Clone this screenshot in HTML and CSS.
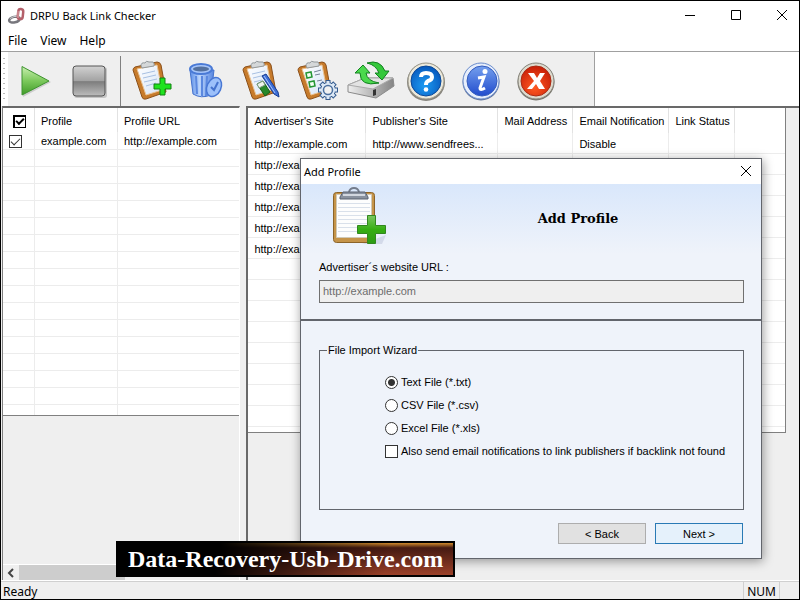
FILE: index.html
```
<!DOCTYPE html>
<html lang="en">
<head>
    <meta charset="UTF-8">
    <meta name="viewport" content="width=device-width, initial-scale=1.0">
    <title>DRPU Back Link Checker</title>
    <link rel="stylesheet" href="styles.css">
</head>
<body>
    <div class="window">
        <header class="title-bar">
            <svg class="app-icon" viewBox="0 0 18 18" width="18" height="18">
                <ellipse cx="6.500" cy="12.500" rx="5.500" ry="2.800" fill="none" stroke="#77777d" stroke-width="2.500" transform="rotate(-12 7 12.500)"/>
                <path d="M2 11.500q4-3 8-2" fill="none" stroke="#c8c8cc"/>
                <rect x="10" y="2" width="5" height="10" rx="2.500" fill="none" stroke="#b4606a" stroke-width="2.500" transform="rotate(6 12 7)"/>
                <path d="M10 4v7" stroke="#e2a9ae"/>
            </svg>
            <h1>DRPU Back Link Checker</h1>
            <div class="window-buttons">
                <button type="button" aria-label="Minimize"><svg viewBox="0 0 12 12" width="12" height="12"><path d="M1 5.500h10" stroke="#000"/></svg></button>
                <button type="button" aria-label="Maximize"><svg viewBox="0 0 12 12" width="12" height="12"><path d="M1.500 .500h9v9h-9z" fill="none" stroke="#000"/></svg></button>
                <button type="button" aria-label="Close"><svg viewBox="0 0 12 12" width="12" height="12"><path d="M1 0l10 10M11 0L1 10" stroke="#000"/></svg></button>
            </div>
        </header>

        <nav class="menu">
            <a href="#">File</a>
            <a href="#">View</a>
            <a href="#">Help</a>
        </nav>

        <div class="toolbar">
            <div class="grip"></div>
            <div class="tools">
                <button type="button" aria-label="Start">
                    <svg viewBox="0 0 40 40" width="40" height="40">
                        <defs>
                            <linearGradient id="play" x1="0" y1="0" x2="0" y2="1"><stop offset="0" stop-color="#c9efb0"/><stop offset=".5" stop-color="#7cc95c"/><stop offset="1" stop-color="#3f9a27"/></linearGradient>
                        </defs>
                        <path d="M7 7L35 21L7 36z" fill="#aaa" opacity=".5"/>
                        <path d="M6 5.500L33 20L6 34z" fill="url(#play)" stroke="#3f9430" stroke-linejoin="round"/>
                    </svg>
                </button>
                <button type="button" aria-label="Stop">
                    <svg viewBox="0 0 40 40" width="40" height="40">
                        <defs>
                            <linearGradient id="stop" x1="0" y1="0" x2="0" y2="1"><stop offset="0" stop-color="#d2d2d2"/><stop offset=".5" stop-color="#a2a2a2"/><stop offset=".52" stop-color="#7d7d7d"/><stop offset="1" stop-color="#bdbdbd"/></linearGradient>
                        </defs>
                        <rect x="5" y="6" width="33" height="31" rx="3" fill="#999" opacity=".5"/>
                        <rect x="4" y="5" width="32" height="30" rx="3" fill="url(#stop)" stroke="#555"/>
                    </svg>
                </button>
                <div class="separator"></div>
                <button type="button" aria-label="Add profile">
                    <svg viewBox="0 0 40 40" width="40" height="40">
                        <defs>
                            <linearGradient id="paper" x1="0" y1="0" x2="1" y2="1"><stop offset="0" stop-color="#fff"/><stop offset="1" stop-color="#d5e3f6"/></linearGradient>
                            <g id="board">
                                <path d="M4 6L26 1Q29 1 30 4L35 31L15 38Q12 39 11 36L2 9Q2 7 4 6z" fill="#c77b2b" stroke="#8b501b"/>
                                <path d="M6 8L26 4L31 29L15 34z" fill="url(#paper)" stroke="#e9c395"/>
                                <path d="M10 5Q10 1 14 2Q15-1 18 1L22 1Q24 3 23 5L11 7z" fill="#d5d8d9" stroke="#92989b"/>
                            </g>
                        </defs>
                        <use href="#board"/>
                        <path d="M11 13l13-3M12 17l13-3M13 21l13-3M15 25l10-3" stroke="#a8c0e2"/>
                        <path d="M29 17h5v6h6v5h-6v6h-5v-6h-6v-5h6z" fill="#1fe31f" stroke="#128212"/>
                    </svg>
                </button>
                <button type="button" aria-label="Delete profile">
                    <svg viewBox="0 0 40 40" width="40" height="40">
                        <defs>
                            <linearGradient id="bin"><stop offset="0" stop-color="#5c8fe8"/><stop offset=".4" stop-color="#bcd5fb"/><stop offset="1" stop-color="#5484e0"/></linearGradient>
                        </defs>
                        <path d="M4 9L7 33Q15 38 25 34L28 9z" fill="url(#bin)" stroke="#4472cd"/>
                        <path d="M10 15l1 18M16 15v20M21 15l-1 20" stroke="#5b88df" stroke-width="2"/>
                        <ellipse cx="15" cy="8" rx="11" ry="5" fill="#a6c5f9" stroke="#4a7ad6" stroke-width="2"/>
                        <ellipse cx="15" cy="8" rx="8" ry="2.500" fill="#54719f"/>
                        <ellipse cx="28" cy="26" rx="7" ry="10" fill="#9cc0fa" stroke="#4877d4" stroke-width="1.500" transform="rotate(24 28 26)"/>
                        <path d="M25 26l3 3 4-8" fill="none" stroke="#4472cd" stroke-width="2"/>
                    </svg>
                </button>
                <button type="button" aria-label="Edit profile">
                    <svg viewBox="0 0 40 40" width="40" height="40">
                        <use href="#board"/>
                        <path d="M11 13l13-3M12 17l12-3M13 21l8-2" stroke="#a8c0e2"/>
                        <path d="M21 15l4-2 12 18 1 5-5-3z" fill="#3e6fd6" stroke="#173b91"/>
                        <path d="M23 15l11 17" stroke="#a9c6ff"/>
                        <path d="M16 23l6-3 7 11-5 4z" fill="#27882b" stroke="#146018"/>
                        <path d="M16 23l6-3 2 4-6 3z" fill="#eef4ee" stroke="#7c9b7d"/>
                    </svg>
                </button>
                <button type="button" aria-label="Settings">
                    <svg viewBox="0 0 40 40" width="40" height="40">
                        <use href="#board"/>
                        <path d="M10 12l5-1 1 5-5 1zM13 21l5-1 1 5-5 1z" fill="#f5fff5" stroke="#259634" stroke-width="1.500"/>
                        <path d="M18 11l7-2M19 14l5-1M21 20l5-1" stroke="#738196"/>
                        <path d="M32 19v20M22 29h20M25 22l14 14M39 22L25 36" stroke="#345b8f" stroke-width="5"/>
                        <circle cx="32" cy="29" r="7.500" fill="#dce8f5" stroke="#345b8f"/>
                        <path d="M32 20v18M23 29h18M25.700 22.700l12.600 12.600M38.300 22.700L25.700 35.300" stroke="#dce8f5" stroke-width="3"/>
                        <circle cx="32" cy="29" r="4.500" fill="#f1f1f1" stroke="#4a6f9f" stroke-width="1.500"/>
                    </svg>
                </button>
                <button type="button" aria-label="Update">
                    <svg viewBox="-3 0 46 40" width="46" height="40">
                        <defs>
                            <linearGradient id="drive"><stop offset="0" stop-color="#eee"/><stop offset="1" stop-color="#858585"/></linearGradient>
                        </defs>
                        <path d="M-3 24L14 17H42L43 25L25 37L-3 31z" fill="url(#drive)" stroke="#8a8a8a"/>
                        <path d="M-3 24L14 17H42L22 28z" fill="#e3e3e3" stroke="#aaa"/>
                        <path d="M22 29l3-1v6l-3 1z" fill="#333"/>
                        <path d="M16 2Q29-2 34 10H38L31 19L24 12H28Q25 4 16 2z" fill="#34c83b" stroke="#128020"/>
                        <path d="M28 22Q9 26 9 12H4L12 4L19 12H15Q16 20 28 22z" fill="#4bd94d" stroke="#128020"/>
                    </svg>
                </button>
                <button type="button" aria-label="Help">
                    <svg viewBox="0 0 40 40" width="40" height="40">
                        <defs>
                            <radialGradient id="blue" cx=".45" cy=".65" r=".65"><stop offset="0" stop-color="#1d9bf2"/><stop offset="1" stop-color="#0758bd"/></radialGradient>
                        </defs>
                        <circle cx="20" cy="21" r="19" fill="#86847d"/>
                        <circle cx="20" cy="20" r="18" fill="#ece9dc" stroke="#9a978a"/>
                        <circle cx="20" cy="20" r="15" fill="url(#blue)" stroke="#0b4897"/>
                        <path d="M15 16Q15 12 20 12Q26 12 26 16Q26 19 22 20Q20 21 20 24" fill="none" stroke="#fff" stroke-width="4"/>
                        <circle cx="20" cy="28.500" r="2.300" fill="#fff"/>
                    </svg>
                </button>
                <button type="button" aria-label="About">
                    <svg viewBox="0 0 40 40" width="40" height="40">
                        <defs>
                            <linearGradient id="info" x1="0" y1="0" x2="0" y2="1"><stop offset="0" stop-color="#75a0ee"/><stop offset="1" stop-color="#204bcd"/></linearGradient>
                        </defs>
                        <circle cx="20" cy="21" r="18.500" fill="#64779c"/>
                        <circle cx="20" cy="20" r="18" fill="#e7eefb" stroke="#6b8dcc"/>
                        <circle cx="21" cy="20" r="15" fill="url(#info)" stroke="#345cbd"/>
                        <path d="M17 17l6-1-4 11q0 3 5 0" fill="none" stroke="#fff" stroke-width="3"/>
                        <circle cx="24" cy="10.500" r="2.500" fill="#fff"/>
                    </svg>
                </button>
                <button type="button" aria-label="Exit">
                    <svg viewBox="0 0 40 40" width="40" height="40">
                        <defs>
                            <radialGradient id="red" cx=".45" cy=".7" r=".65"><stop offset="0" stop-color="#ff5a22"/><stop offset="1" stop-color="#cb2209"/></radialGradient>
                        </defs>
                        <circle cx="20" cy="21" r="18.500" fill="#77756d"/>
                        <circle cx="20" cy="20" r="18" fill="#dddace" stroke="#85837a"/>
                        <circle cx="20" cy="20" r="15" fill="url(#red)" stroke="#a92a14"/>
                        <path d="M12 12h6l3 5 3-5h5l-5 8 5 8h-6l-3-5-4 5h-5l7-8z" fill="#fff"/>
                    </svg>
                </button>
            </div>
        </div>

        <main class="panes">
            <section class="pane profiles">
                <table>
                    <colgroup><col class="check-col"><col class="profile-col"><col></colgroup>
                    <thead>
                        <tr>
                            <th><input class="check-all" type="checkbox" aria-label="Select all profiles" checked></th>
                            <th>Profile</th>
                            <th>Profile URL</th>
                        </tr>
                    </thead>
                    <tbody>
                        <tr>
                            <td><input type="checkbox" aria-label="Select example.com" checked></td>
                            <td>example.com</td>
                            <td>http://example.com</td>
                        </tr>
                        <tr class="filler"><td></td><td></td><td></td></tr>
                    </tbody>
                </table>
                <div class="scrollbar">
                    <button type="button" aria-label="Scroll left"><svg viewBox="0 0 8 10" width="8" height="10"><path d="M6 1L2 5l4 4" fill="none" stroke="#444" stroke-width="2"/></svg></button>
                    <div class="thumb"></div>
                </div>
            </section>

            <section class="pane links">
                <table>
                    <colgroup><col class="site-col"><col class="publisher-col"><col class="mail-col"><col class="notify-col"><col class="status-col"><col></colgroup>
                    <thead>
                        <tr>
                            <th>Advertiser's Site</th>
                            <th>Publisher's Site</th>
                            <th>Mail Address</th>
                            <th>Email Notification</th>
                            <th>Link Status</th>
                            <th></th>
                        </tr>
                    </thead>
                    <tbody>
                        <tr><td>http://example.com</td><td>http://www.sendfrees...</td><td></td><td>Disable</td><td></td><td></td></tr>
                        <tr><td>http://example.com</td><td></td><td></td><td></td><td></td><td></td></tr>
                        <tr><td>http://example.com</td><td></td><td></td><td></td><td></td><td></td></tr>
                        <tr><td>http://example.com</td><td></td><td></td><td></td><td></td><td></td></tr>
                        <tr><td>http://example.com</td><td></td><td></td><td></td><td></td><td></td></tr>
                        <tr><td>http://example.com</td><td></td><td></td><td></td><td></td><td></td></tr>
                        <tr class="filler"><td></td><td></td><td></td><td></td><td></td><td></td></tr>
                    </tbody>
                </table>
            </section>
        </main>

        <footer class="status-bar">
            <span>Ready</span>
            <span class="num">NUM</span>
        </footer>

        <form class="dialog" role="dialog" aria-labelledby="dialog-title">
            <div class="dialog-bar">
                <span id="dialog-title">Add Profile</span>
                <button type="button" aria-label="Close dialog"><svg viewBox="0 0 12 12" width="12" height="12"><path d="M1 0l10 10M11 0L1 10" stroke="#000"/></svg></button>
            </div>
            <div class="dialog-top">
                <div class="dialog-heading">
                    <svg viewBox="0 0 56 60" width="56" height="60">
                        <defs>
                            <linearGradient id="plus" x1="0" y1="0" x2="0" y2="1"><stop offset="0" stop-color="#7bc661"/><stop offset=".5" stop-color="#35ae12"/><stop offset="1" stop-color="#2d9b14"/></linearGradient>
                        </defs>
                        <path d="M30 58L54 49L50 58z" fill="#9aa6c2" opacity=".3"/>
                        <rect x="1.500" y="6.500" width="41" height="50" rx="3" fill="#c59449" stroke="#8c6429"/>
                        <path d="M4.500 8.500h35v43h-35z" fill="#fdfdfd" stroke="#d0c9b8"/>
                        <path d="M6 17.500h32M6 21.500h32M6 25.500h32M6 29.500h32M6 33.500h32M6 37.500h32M6 41.500h32M6 45.500h32" stroke="#d9e0ea"/>
                        <path d="M17 6q1-4 5-4t5 4" fill="none" stroke="#747d8c" stroke-width="2"/>
                        <path d="M8 11l3-5h22l3 5v2H8z" fill="#89919e" stroke="#5b6370"/>
                        <path d="M11 9h22" stroke="#d2d7df" stroke-width="2"/>
                        <path d="M35.500 29.500h8v10h10v8h-10v10h-8v-10h-10v-8h10z" fill="url(#plus)" stroke="#31881e"/>
                    </svg>
                    <h2>Add Profile</h2>
                </div>
                <label class="url-label" for="site-url">Advertiser´s website URL :</label>
                <input class="url-box" id="site-url" type="text" value="http://example.com" readonly>
            </div>
            <div class="dialog-body">
                <fieldset>
                    <legend>File Import Wizard</legend>
                    <label><input type="radio" name="file-type" checked>Text File (*.txt)</label>
                    <label><input type="radio" name="file-type">CSV File (*.csv)</label>
                    <label><input type="radio" name="file-type">Excel File (*.xls)</label>
                    <label><input type="checkbox" name="notify">Also send email notifications to link publishers if backlink not found</label>
                </fieldset>
                <div class="dialog-buttons">
                    <button type="button">&lt; Back</button>
                    <button type="button" class="default">Next &gt;</button>
                </div>
            </div>
        </form>

        <a class="banner" href="#">Data-Recovery-Usb-Drive.com</a>
    </div>
</body>
</html>
```
FILE: styles.css
```
*,
*::after {
    box-sizing: border-box;
}

body {
    margin: 0;
    font-family: "Liberation Sans", Arial, sans-serif;
    font-size: 11px;
    color: #000;
}

button,
input {
    font: inherit;
    color: inherit;
    margin: 0;
}

button {
    border: none;
    padding: 0;
    background: none;
}

svg {
    display: block;
    overflow: visible;
}

.window {
    position: relative;
    display: flex;
    flex-direction: column;
    min-height: 100vh;
    border: 1px solid #000;
    background-color: #efefef;
}

/* Title bar and menu */
.title-bar {
    display: flex;
    align-items: center;
    height: 30px;
    padding: 0 11px 0 7px;
    gap: 4px;
    background-color: #fff;
    font-family: "Noto Sans", sans-serif;
}

.title-bar h1 {
    flex: 1;
    margin: 0;
    padding-bottom: 2px;
    font-size: 11px;
    font-weight: normal;
}

.window-buttons {
    display: flex;
    gap: 34px;
}

.menu {
    display: flex;
    gap: 13px;
    height: 21px;
    padding: 0 7px;
    background-color: #fff;
    border-bottom: 1px solid #a0a0a0;
    font-family: "Noto Sans", sans-serif;
    font-size: 12px;
    line-height: 19px;
}

.menu a {
    color: #000;
    text-decoration: none;
}

/* Toolbar */
.toolbar {
    display: flex;
    height: 54px;
    background-color: #fff;
}

.grip {
    width: 7px;
    margin: 4px 0;
    background: radial-gradient(circle, #bbb 1px, transparent 1px) 0 0 / 6px 5px;
}

.tools {
    display: flex;
    align-items: center;
    gap: 15px;
    padding: 4px 38px 0 8px;
    background-color: #efefef;
    border-right: 1px solid #a0a0a0;
}

.tools button {
    display: flex;
    justify-content: center;
    width: 40px;
}

.tools button + button:nth-child(2) {
    margin-left: -2px;
}

.separator {
    align-self: stretch;
    width: 1px;
    margin: 0 -5px 0 -4px;
    background-color: #808080;
}

/* Lists */
.panes {
    flex: 1;
    display: grid;
    grid-template-columns: 30fr 70fr;
}

.pane {
    display: flex;
    flex-direction: column;
    justify-content: space-between;
    align-items: flex-start;
    border-top: 2px solid #696969;
}

.profiles {
    margin-left: 1px;
    border-left: 1px solid #808080;
    border-right: 1px solid #fff;
}

.links {
    margin-left: 6px;
    padding-right: 13px;
    border-left: 2px solid #696969;
}

table {
    width: 100%;
    table-layout: fixed;
    border-collapse: separate;
    border-spacing: 0;
    background-color: #fff;
    border-bottom: 1px solid #808080;
}

.links table {
    border-right: 1px solid #808080;
}

th,
td {
    height: 21px;
    padding: 2px 0 0 6px;
    border-right: 1px solid #ececec;
    border-bottom: 1px solid #ececec;
    font-weight: normal;
    line-height: 15px;
    text-align: left;
    white-space: nowrap;
}

th {
    height: 25px;
    border-bottom: none;
    border-right-color: #e2e2e2;
}

th:last-child,
td:last-child {
    border-right: none;
}

.profiles th {
    height: 24px;
}

.profiles td {
    height: 18px;
}

.profiles td:first-child {
    padding-left: 6px;
}

.profiles th:first-child {
    padding-left: 10px;
}

.profiles .filler td {
    height: 265px;
    border-bottom: none;
    background: repeating-linear-gradient(transparent 0 16px, #ececec 16px 17px);
}

.links .filler td {
    height: 173px;
    border-bottom: none;
    background: repeating-linear-gradient(transparent 0 20px, #ececec 20px 21px);
}

.check-col { width: 32px; }
.profile-col { width: 83px; }
.site-col { width: 118px; }
.publisher-col { width: 132px; }
.mail-col { width: 75px; }
.notify-col { width: 96px; }
.status-col { width: 66px; }

.scrollbar {
    display: flex;
    width: 100%;
    height: 17px;
    border-top: 1px solid #fff;
}

.scrollbar button {
    display: flex;
    align-items: center;
    justify-content: center;
    width: 16px;
}

.thumb {
    width: 45%;
    background-color: #cdcdcd;
}

/* Check boxes and radio buttons */
input[type="checkbox"],
input[type="radio"] {
    appearance: none;
    display: block;
    flex: none;
    width: 13px;
    height: 13px;
    border: 1px solid #333;
    background-color: #fff;
}

input[type="radio"] {
    border-radius: 50%;
}

input[type="radio"]:checked {
    background: radial-gradient(circle, #333 3px, #fff 4px);
}

input[type="checkbox"]:checked::after {
    content: "";
    display: block;
    width: 9px;
    height: 5px;
    margin: 2px 1px;
    border-left: 1px solid #333;
    border-bottom: 1px solid #333;
    transform: rotate(-45deg);
}

input.check-all {
    border-color: #000;
    border-width: 2px 1px 1px 2px;
}

input.check-all:checked::after {
    width: 8px;
    margin: 1px;
    border-color: #000;
    border-width: 0 0 2px 2px;
}

/* Status bar */
.status-bar {
    display: flex;
    justify-content: space-between;
    height: 18px;
    padding: 0 19px 0 2px;
    border-top: 1px solid #d0d0d0;
    box-shadow: 0 -1px #fff;
    font-family: "Noto Sans", sans-serif;
    font-size: 12px;
    line-height: 20px;
}

.num {
    padding: 0 3px;
    border-left: 1px solid #d0d0d0;
    border-right: 1px solid #d0d0d0;
}

/* Add profile dialog */
.dialog {
    position: absolute;
    top: 157px;
    left: 299px;
    width: 462px;
    border: 1px solid #62656c;
    background-color: #eff3fa;
    box-shadow: 1px 2px 10px rgba(0, 0, 0, 0.4);
}

.dialog-bar {
    display: flex;
    align-items: center;
    justify-content: space-between;
    height: 25px;
    padding: 0 9px 0 3px;
    background-color: #fff;
    font-family: "Noto Sans", sans-serif;
    font-size: 11px;
}

.dialog-top {
    padding: 2px 17px 16px 18px;
    border-bottom: 2px solid #62656c;
    background: linear-gradient(#d9e7fb, #eff3fa 70px);
}

.dialog-heading {
    display: flex;
    align-items: center;
    padding-left: 13px;
}

.dialog-heading h2 {
    flex: 1;
    margin: 0;
    padding: 4px 0 0 24px;
    font-family: "DejaVu Serif", serif;
    font-size: 13px;
    text-align: center;
}

.url-label {
    display: block;
    padding: 13px 0 5px;
    line-height: 16px;
}

.url-box {
    width: 100%;
    height: 23px;
    padding: 0 3px 2px;
    border: 1px solid #707070;
    background-color: #efefef;
    color: #6d6d6d;
}

.dialog-body {
    padding: 21px 17px 14px 18px;
}

fieldset {
    display: flex;
    flex-direction: column;
    gap: 7px;
    min-width: 0;
    margin: 0;
    padding: 16px 0 50px 65px;
    border: 1px solid #62656c;
}

legend {
    margin-left: -58px;
    padding: 0 1px;
    line-height: 16px;
}

fieldset label {
    display: flex;
    align-items: center;
    gap: 3px;
    line-height: 16px;
    white-space: nowrap;
}

.dialog-buttons {
    display: flex;
    justify-content: flex-end;
    gap: 9px;
    padding: 13px 1px 0 0;
}

.dialog-buttons button {
    width: 88px;
    height: 21px;
    border: 1px solid #adadad;
    background-color: #e1e1e1;
}

.dialog-buttons .default {
    border-color: #2a7ab5;
    background-color: #e5f1fb;
}

/* Site banner */
.banner {
    position: absolute;
    left: 115px;
    bottom: 22px;
    padding: 0 10px;
    border: 2px solid #000;
    background: linear-gradient(100deg, #000 30%, transparent 80%), linear-gradient(#d08a2c, #451a12 15%, #9a4028);
    color: #fff;
    font-family: "Liberation Serif", serif;
    font-size: 24px;
    font-weight: bold;
    line-height: 32px;
    text-decoration: none;
}
```
